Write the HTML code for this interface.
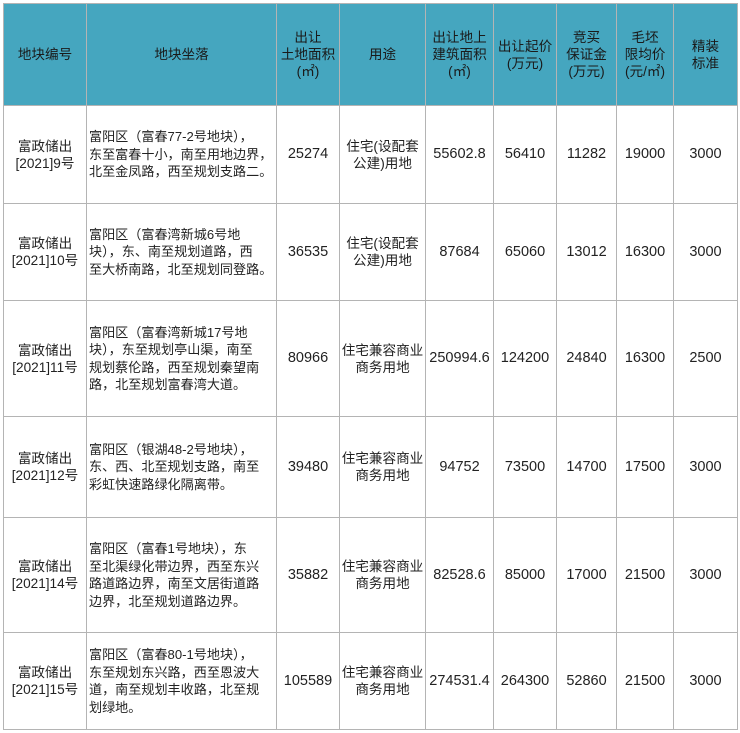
<!DOCTYPE html>
<html><head><meta charset="utf-8"><style>
html,body{margin:0;padding:0;background:#fff;width:740px;height:733px;overflow:hidden}
table{position:absolute;left:3px;top:3px;border-collapse:collapse;table-layout:fixed;font-family:"Liberation Sans","Noto Sans CJK SC",sans-serif;font-size:13.6px;line-height:17px;color:#222}
td{border:1px solid #b4b4b4;text-align:center;vertical-align:middle;padding:0 1px;overflow:hidden}
tr.h td{background:#45a6bf;color:#1a1a1a;height:101px}
td.l{text-align:left;padding-left:2px;padding-right:0;white-space:nowrap;font-size:13.1px;line-height:17.5px}
td.n{font-size:14.5px}
</style></head><body>
<table>
<colgroup><col style="width:83px"><col style="width:190px"><col style="width:63px"><col style="width:86px"><col style="width:68px"><col style="width:63px"><col style="width:60px"><col style="width:57px"><col style="width:64px"></colgroup>
<tr class="h"><td>地块编号</td><td>地块坐落</td><td>出让<br>土地面积<br>(㎡)</td><td>用途</td><td>出让地上<br>建筑面积<br>(㎡)</td><td>出让起价<br>(万元)</td><td>竞买<br>保证金<br>(万元)</td><td>毛坯<br>限均价<br>(元/㎡)</td><td>精装<br>标准</td></tr>
<tr style="height:98px"><td>富政储出<br>[2021]9号</td><td class="l">富阳区（富春77-2号地块），<br>东至富春十小，南至用地边界，<br>北至金凤路，西至规划支路二。</td><td class="n">25274</td><td>住宅(设配套<br>公建)用地</td><td class="n">55602.8</td><td class="n">56410</td><td class="n">11282</td><td class="n">19000</td><td class="n">3000</td></tr>
<tr style="height:97px"><td>富政储出<br>[2021]10号</td><td class="l">富阳区（富春湾新城6号地<br>块），东、南至规划道路，西<br>至大桥南路，北至规划同登路。</td><td class="n">36535</td><td>住宅(设配套<br>公建)用地</td><td class="n">87684</td><td class="n">65060</td><td class="n">13012</td><td class="n">16300</td><td class="n">3000</td></tr>
<tr style="height:116px"><td>富政储出<br>[2021]11号</td><td class="l">富阳区（富春湾新城17号地<br>块），东至规划亭山渠，南至<br>规划蔡伦路，西至规划秦望南<br>路，北至规划富春湾大道。</td><td class="n">80966</td><td>住宅兼容商业<br>商务用地</td><td class="n">250994.6</td><td class="n">124200</td><td class="n">24840</td><td class="n">16300</td><td class="n">2500</td></tr>
<tr style="height:101px"><td>富政储出<br>[2021]12号</td><td class="l">富阳区（银湖48-2号地块），<br>东、西、北至规划支路，南至<br>彩虹快速路绿化隔离带。</td><td class="n">39480</td><td>住宅兼容商业<br>商务用地</td><td class="n">94752</td><td class="n">73500</td><td class="n">14700</td><td class="n">17500</td><td class="n">3000</td></tr>
<tr style="height:115px"><td>富政储出<br>[2021]14号</td><td class="l">富阳区（富春1号地块），东<br>至北渠绿化带边界，西至东兴<br>路道路边界，南至文居街道路<br>边界，北至规划道路边界。</td><td class="n">35882</td><td>住宅兼容商业<br>商务用地</td><td class="n">82528.6</td><td class="n">85000</td><td class="n">17000</td><td class="n">21500</td><td class="n">3000</td></tr>
<tr style="height:97px"><td>富政储出<br>[2021]15号</td><td class="l">富阳区（富春80-1号地块），<br>东至规划东兴路，西至恩波大<br>道，南至规划丰收路，北至规<br>划绿地。</td><td class="n">105589</td><td>住宅兼容商业<br>商务用地</td><td class="n">274531.4</td><td class="n">264300</td><td class="n">52860</td><td class="n">21500</td><td class="n">3000</td></tr>
</table>
</body></html>
